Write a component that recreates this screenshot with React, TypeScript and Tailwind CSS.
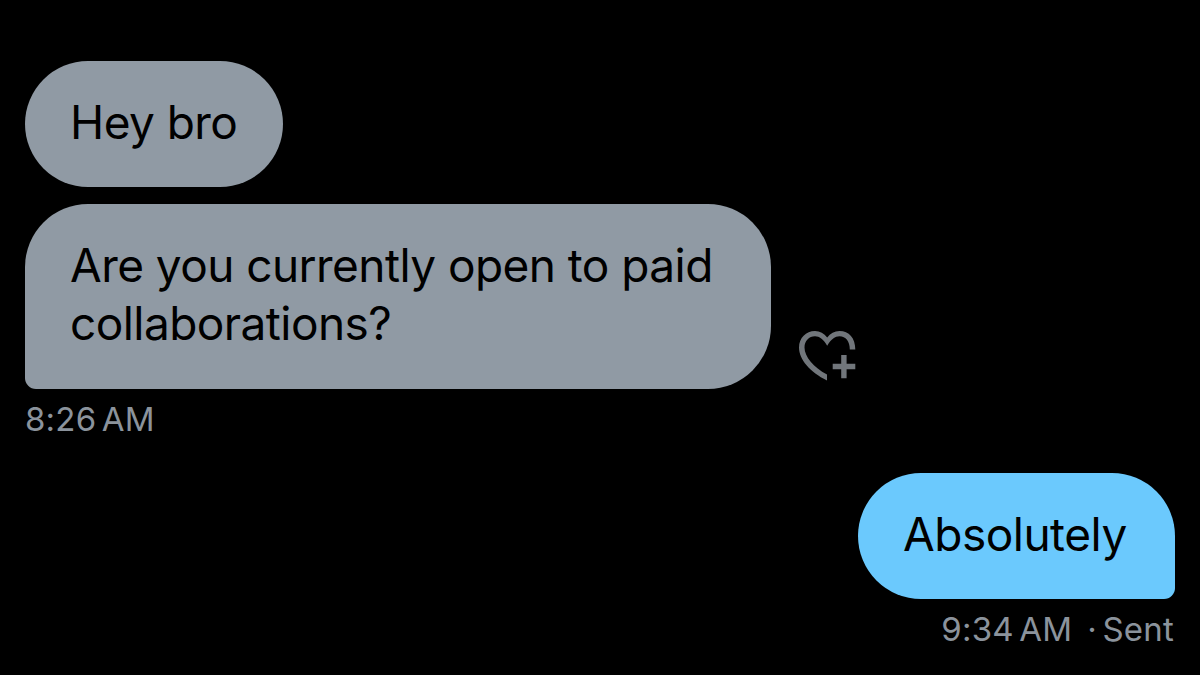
type Message = {
  id: number;
  text: string;
  bubble: string;
};

const incoming: Message[] = [
  { id: 1, text: "Hey bro", bubble: "w-[258px] h-[126px] rounded-[63px]" },
  {
    id: 2,
    text: "Are you currently open to paid collaborations?",
    bubble: "w-[746px] h-[185px] rounded-[63px] rounded-bl-[11px]",
  },
];

function HeartPlus() {
  return (
    <svg width="58" height="52" viewBox="0 0 58 52" fill="#71767b">
      <path d="M28 50.500C11 42 0 29.500 0 17.500C0 8 7 1 16 1C21 1 25 3.200 28.200 7.500C31.300 3.200 35.500 1 40.500 1C50 1 56.300 8 56.300 19.500H50.800C50.800 11.500 46.800 6.300 40.500 6.300C36 6.300 32.500 9 28.200 15.700C24 9 20.500 6.300 16 6.300C10 6.300 5.500 11 5.500 17.500C5.500 26.500 14.500 37.500 28 44.500Z" />
      <path d="M42.200 25h5.400v8.800h8.700v5.400h-8.700v9h-5.400v-9h-8.500v-5.400h8.500z" />
    </svg>
  );
}

export default function App() {
  return (
    <div className="w-[1200px] h-[675px] bg-black overflow-hidden flex flex-col px-[25px] pt-[61px] font-[Inter,sans-serif]">
      <div className="flex items-end">
        <div className="flex flex-col gap-[17px]">
          {incoming.map((m) => (
            <div
              key={m.id}
              className={`bg-[#909aa4] text-black pl-[45px] pr-[40px] pt-[32px] text-[46px] leading-[58px] tracking-[-0.56px] ${m.bubble}`}
            >
              {m.text}
            </div>
          ))}
        </div>
        <div className="ml-7 mb-[7px]">
          <HeartPlus />
        </div>
      </div>

      <div className="mt-[9px] text-[33px] leading-[42px] text-[#8b939c] tracking-[0.2px] [word-spacing:-4px]">8:26 AM</div>

      <div className="mt-[33px] flex flex-col items-end">
        <div className="w-[317px] h-[126px] rounded-[63px] rounded-br-[11px] bg-[#6bc9fd] text-black pl-[45px] pt-[32px] text-[46px] leading-[58px] tracking-[-0.5px]">
          Absolutely
        </div>
        <div className="mt-[9px] pr-px flex text-[33px] leading-[42px] text-[#8b939c] tracking-[0.2px] [word-spacing:-4px]">
          <span className="mr-[15px]">9:34 AM</span>
          <span>· Sent</span>
        </div>
      </div>
    </div>
  );
}
